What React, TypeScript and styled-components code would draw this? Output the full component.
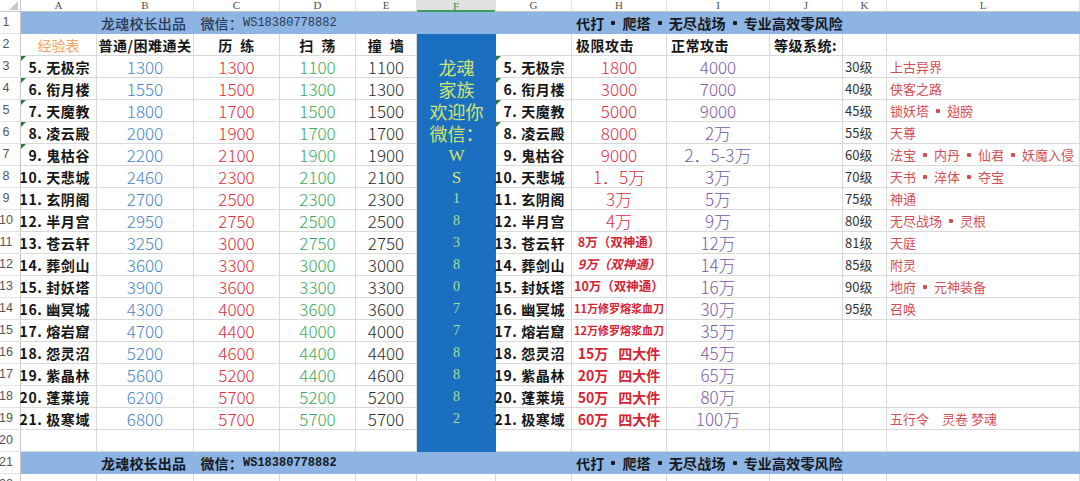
import React from "react";
import styled, { createGlobalStyle, css } from "styled-components";

const COLS = [21, 76, 97, 86, 76, 61, 79, 76, 95, 103, 73, 44, 193];
const LETTERS = ["A", "B", "C", "D", "E", "F", "G", "H", "I", "J", "K", "L"];
const GRID = "#d9d9d9";
const SANS = `"Noto Sans CJK SC", "Noto Sans", sans-serif`;

const GlobalStyle = createGlobalStyle`
  html, body { margin: 0; padding: 0; background: #fff; }
  body { font-family: ${SANS}; overflow: hidden; }
  #root { width: 1080px; height: 481px; overflow: hidden; }
`;

const Sheet = styled.div`
  display: grid;
  grid-template-columns: ${COLS.map((w) => `${w}px`).join(" ")};
  grid-template-rows: 12px repeat(22, 22px);
  width: 1080px;
  height: 481px;
  overflow: hidden;
  background: #fff;
`;

const Pos = styled.div<{ $r: number; $c: number }>`
  grid-row: ${(p) => p.$r};
  grid-column: ${(p) => p.$c};
  box-sizing: border-box;
  min-width: 0;
  position: relative;
  display: flex;
  align-items: center;
  white-space: nowrap;
  line-height: 1;
`;

const Corner = styled(Pos)`
  border-right: 1px solid #c6c6c6;
  border-bottom: 1px solid #c6c6c6;
  &::after {
    content: "";
    position: absolute;
    right: 2px;
    bottom: 1px;
    border-left: 9px solid transparent;
    border-bottom: 9px solid #c8c8c8;
  }
`;

const ColHead = styled(Pos)<{ $active?: boolean }>`
  justify-content: center;
  font-family: "Liberation Serif", serif;
  font-size: 11px;
  color: #505050;
  border-right: 1px solid #e2e2e2;
  border-bottom: 1px solid #c6c6c6;
  ${(p) =>
    p.$active &&
    css`
      background: #e1e1e1;
      color: #2f8f4f;
      border-bottom: none;
      box-shadow: inset 0 -2px 0 #3f9d5c;
    `}
`;

const RowHead = styled(Pos)`
  justify-content: center;
  padding-right: 8px;
  font-family: "Liberation Sans", sans-serif;
  font-size: 12.5px;
  color: #555;
  border-right: 1px solid #c6c6c6;
  border-bottom: 1px solid #e2e2e2;
`;

const Cell = styled(Pos)<{ $align?: "left" | "center" | "right" }>`
  border-right: 1px solid ${GRID};
  border-bottom: 1px solid ${GRID};
  padding: 0 4px;
  justify-content: ${(p) =>
    p.$align === "left" ? "flex-start" : p.$align === "right" ? "flex-end" : "center"};
`;

const LabelCell = styled(Cell)<{ $flag?: boolean }>`
  justify-content: flex-end;
  padding-right: 6px;
  font-size: 14px;
  font-weight: 700;
  letter-spacing: 0.6px;
  color: #151515;
  ${(p) =>
    p.$flag &&
    css`
      &::before {
        content: "";
        position: absolute;
        left: 0;
        top: 0;
        border-top: 5px solid #2a7a3c;
        border-right: 5px solid transparent;
      }
    `}
`;

const TitleCell = styled(Cell)`
  font-size: 14px;
  color: #f2a45e;
`;

const HeadCell = styled(Cell)`
  font-size: 14px;
  font-weight: 700;
  color: #151515;
  letter-spacing: 0.5px;
`;

const NumCell = styled(Cell)<{ $tone: string }>`
  justify-content: center;
  font-size: 17px;
  font-weight: 300;
  color: ${(p) => p.$tone};
`;

const NoteCell = styled(Cell)<{ $variant: "god" | "godItalic" | "blade" | "four" }>`
  justify-content: center;
  padding: 0 2px;
  font-weight: 700;
  color: #d42434;
  font-size: ${(p) => (p.$variant === "blade" ? "11px" : p.$variant === "four" ? "14px" : "12.5px")};
  font-style: ${(p) => (p.$variant === "godItalic" ? "italic" : "normal")};
`;

const Gap = styled.span`
  display: inline-block;
  width: 10px;
`;

const LevelCell = styled(Cell)`
  justify-content: flex-start;
  padding-left: 2px;
  font-size: 13px;
  color: #333;
`;

const UnlockCell = styled(Cell)`
  justify-content: flex-start;
  padding-left: 3px;
  font-size: 13px;
  color: #d24f55;
`;

const Dot = styled.span<{ $space?: number }>`
  display: inline-block;
  flex: none;
  width: 4px;
  height: 4px;
  border-radius: 1px;
  background: currentColor;
  margin: 0 ${(p) => p.$space ?? 7}px;
`;

const Band = styled.div<{ $r: number }>`
  grid-row: ${(p) => p.$r};
  grid-column: 2 / 14;
  display: grid;
  grid-template-columns: ${COLS.slice(1).map((w) => `${w}px`).join(" ")};
  align-items: center;
  background: #8db4e2;
  line-height: 1;
  white-space: nowrap;
`;

const BandText = styled.div<{ $col: number; $strong?: boolean }>`
  grid-column: ${(p) => p.$col} / span 5;
  display: flex;
  align-items: center;
  padding-left: 4px;
  font-size: 14px;
  font-weight: ${(p) => (p.$strong ? 700 : 500)};
  color: ${(p) => (p.$strong ? "#151a22" : "#2a3a52")};
  letter-spacing: 0.2px;
  min-width: 0;
`;

const Mono = styled.span`
  font-family: "Liberation Mono", monospace;
  font-size: 12px;
  letter-spacing: 0;
`;

type FKind = "big" | "letter" | "digit" | "none";

const FCell = styled(Pos)<{ $kind: FKind }>`
  justify-content: center;
  background: #1a6fc0;
  ${(p) =>
    p.$kind === "big"
      ? css`
          font-size: 18px;
          color: #cfe56f;
        `
      : p.$kind === "letter"
      ? css`
          font-family: "Liberation Serif", serif;
          font-size: 17px;
          color: #d4e66f;
        `
      : css`
          font-family: "Liberation Serif", serif;
          font-size: 14px;
          color: #a6e29a;
        `}
`;

type HNote = { text: string; variant?: "god" | "godItalic" | "blade" | "four" };
type Row = {
  a: string;
  b: string;
  c: string;
  d: string;
  e: string;
  h: HNote;
  i: string;
  k?: string;
  l?: string;
};

const ROWS: Row[] = [
  { a: "5. 无极宗", b: "1300", c: "1300", d: "1100", e: "1100", h: { text: "1800" }, i: "4000", k: "30级", l: "上古异界" },
  { a: "6. 衔月楼", b: "1550", c: "1500", d: "1300", e: "1300", h: { text: "3000" }, i: "7000", k: "40级", l: "侠客之路" },
  { a: "7. 天魔教", b: "1800", c: "1700", d: "1500", e: "1500", h: { text: "5000" }, i: "9000", k: "45级", l: "锁妖塔・翅膀" },
  { a: "8. 凌云殿", b: "2000", c: "1900", d: "1700", e: "1700", h: { text: "8000" }, i: "2万", k: "55级", l: "天尊" },
  { a: "9. 鬼枯谷", b: "2200", c: "2100", d: "1900", e: "1900", h: { text: "9000" }, i: "2．5-3万", k: "60级", l: "法宝・内丹・仙君・妖魔入侵" },
  { a: "10. 天悲城", b: "2460", c: "2300", d: "2100", e: "2100", h: { text: "1．5万" }, i: "3万", k: "70级", l: "天书・淬体・夺宝" },
  { a: "11. 玄阴阁", b: "2700", c: "2500", d: "2300", e: "2300", h: { text: "3万" }, i: "5万", k: "75级", l: "神通" },
  { a: "12. 半月宫", b: "2950", c: "2750", d: "2500", e: "2500", h: { text: "4万" }, i: "9万", k: "80级", l: "无尽战场・灵根" },
  { a: "13. 苍云轩", b: "3250", c: "3000", d: "2750", e: "2750", h: { text: "8万（双神通）", variant: "god" }, i: "12万", k: "81级", l: "天庭" },
  { a: "14. 葬剑山", b: "3600", c: "3300", d: "3000", e: "3000", h: { text: "9万（双神通）", variant: "godItalic" }, i: "14万", k: "85级", l: "附灵" },
  { a: "15. 封妖塔", b: "3900", c: "3600", d: "3300", e: "3300", h: { text: "10万（双神通）", variant: "god" }, i: "16万", k: "90级", l: "地府・元神装备" },
  { a: "16. 幽冥城", b: "4300", c: "4000", d: "3600", e: "3600", h: { text: "11万修罗熔浆血刀", variant: "blade" }, i: "30万", k: "95级", l: "召唤" },
  { a: "17. 熔岩窟", b: "4700", c: "4400", d: "4000", e: "4000", h: { text: "12万修罗熔浆血刀", variant: "blade" }, i: "35万" },
  { a: "18. 怨灵沼", b: "5200", c: "4600", d: "4400", e: "4400", h: { text: "15万|四大件", variant: "four" }, i: "45万" },
  { a: "19. 紫晶林", b: "5600", c: "5200", d: "4400", e: "4600", h: { text: "20万|四大件", variant: "four" }, i: "65万" },
  { a: "20. 蓬莱境", b: "6200", c: "5700", d: "5200", e: "5200", h: { text: "50万|四大件", variant: "four" }, i: "80万" },
  { a: "21. 极寒域", b: "6800", c: "5700", d: "5700", e: "5700", h: { text: "60万|四大件", variant: "four" }, i: "100万", l: "五行令　灵卷 梦魂" },
];

const F_TEXTS: { t: string; k: FKind }[] = [
  { t: "", k: "none" },
  { t: "龙魂", k: "big" },
  { t: "家族", k: "big" },
  { t: "欢迎你", k: "big" },
  { t: "微信：", k: "big" },
  { t: "W", k: "letter" },
  { t: "S", k: "letter" },
  ...["1", "8", "3", "8", "0", "7", "7", "8", "8", "8", "2"].map((t) => ({ t, k: "digit" as const })),
  { t: "", k: "none" },
];

const withDots = (text: string, space?: number) => {
  const parts = text.split("・");
  return parts.map((p, idx) => (
    <React.Fragment key={idx}>
      {idx > 0 && <Dot $space={space} />}
      {p}
    </React.Fragment>
  ));
};

const renderNote = (h: HNote) => {
  if (h.variant === "four") {
    const [a, b] = h.text.split("|");
    return (
      <>
        {a}
        <Gap />
        {b}
      </>
    );
  }
  return h.text;
};

export default function App() {
  const cells: React.ReactNode[] = [];

  cells.push(<Corner key="corner" $r={1} $c={1} />);
  LETTERS.forEach((l, idx) => {
    cells.push(
      <ColHead key={`ch-${l}`} $r={1} $c={idx + 2} $active={l === "F"}>
        {l}
      </ColHead>
    );
  });
  for (let n = 1; n <= 22; n++) {
    cells.push(
      <RowHead key={`rh-${n}`} $r={n + 1} $c={1}>
        {n}
      </RowHead>
    );
  }

  const r2 = 3;
  cells.push(<TitleCell key="a2" $r={r2} $c={2}>经验表</TitleCell>);
  cells.push(<HeadCell key="b2" $r={r2} $c={3}>普通/困难通关</HeadCell>);
  cells.push(<HeadCell key="c2" $r={r2} $c={4}>历{"\u2002"}练</HeadCell>);
  cells.push(<HeadCell key="d2" $r={r2} $c={5}>扫{"\u2002"}荡</HeadCell>);
  cells.push(<HeadCell key="e2" $r={r2} $c={6}>撞{"\u2002"}墙</HeadCell>);
  cells.push(<HeadCell key="g2" $r={r2} $c={8} />);
  cells.push(<HeadCell key="h2" $r={r2} $c={9} $align="left">极限攻击</HeadCell>);
  cells.push(<HeadCell key="i2" $r={r2} $c={10} $align="left">正常攻击</HeadCell>);
  cells.push(<HeadCell key="j2" $r={r2} $c={11} $align="left">等级系统:</HeadCell>);
  cells.push(<HeadCell key="k2" $r={r2} $c={12} />);
  cells.push(<HeadCell key="l2" $r={r2} $c={13} />);

  F_TEXTS.forEach((f, idx) => {
    cells.push(
      <FCell key={`f${idx + 2}`} $r={idx + 3} $c={7} $kind={f.k}>
        {f.t}
      </FCell>
    );
  });

  ROWS.forEach((row, idx) => {
    const r = idx + 4;
    const n = idx + 3;
    cells.push(
      <LabelCell key={`a${n}`} $r={r} $c={2} $flag={n <= 7}>
        {row.a}
      </LabelCell>
    );
    cells.push(<NumCell key={`b${n}`} $r={r} $c={3} $tone="#4a86c8">{row.b}</NumCell>);
    cells.push(<NumCell key={`c${n}`} $r={r} $c={4} $tone="#dd2f3c">{row.c}</NumCell>);
    cells.push(<NumCell key={`d${n}`} $r={r} $c={5} $tone="#3daa5c">{row.d}</NumCell>);
    cells.push(<NumCell key={`e${n}`} $r={r} $c={6} $tone="#2b2b2b">{row.e}</NumCell>);
    cells.push(
      <LabelCell key={`g${n}`} $r={r} $c={8} $flag={n <= 6}>
        {row.a}
      </LabelCell>
    );
    if (row.h.variant) {
      cells.push(
        <NoteCell key={`h${n}`} $r={r} $c={9} $variant={row.h.variant}>
          {renderNote(row.h)}
        </NoteCell>
      );
    } else {
      cells.push(<NumCell key={`h${n}`} $r={r} $c={9} $tone="#d9303f">{row.h.text}</NumCell>);
    }
    cells.push(<NumCell key={`i${n}`} $r={r} $c={10} $tone="#7d5aa6">{row.i}</NumCell>);
    cells.push(<Cell key={`j${n}`} $r={r} $c={11} />);
    cells.push(<LevelCell key={`k${n}`} $r={r} $c={12}>{row.k ?? ""}</LevelCell>);
    cells.push(
      <UnlockCell key={`l${n}`} $r={r} $c={13}>
        {row.l ? withDots(row.l, 7) : ""}
      </UnlockCell>
    );
  });

  [21, 23].forEach((r) => {
    for (let c = 2; c <= 13; c++) {
      if (r === 21 && c === 7) continue;
      cells.push(<Cell key={`empty-${r}-${c}`} $r={r} $c={c} />);
    }
  });

  return (
    <>
      <GlobalStyle />
      <Sheet>
        {cells}
        <Band $r={2}>
          <BandText $col={2}>
            龙魂校长出品　微信：<Mono>WS18380778882</Mono>
          </BandText>
          <BandText $col={8} $strong>
            {withDots("代打・爬塔・无尽战场・专业高效零风险", 7)}
          </BandText>
        </Band>
        <Band $r={22}>
          <BandText $col={2} $strong>
            龙魂校长出品　微信：<Mono>WS18380778882</Mono>
          </BandText>
          <BandText $col={8} $strong>
            {withDots("代打・爬塔・无尽战场・专业高效零风险", 7)}
          </BandText>
        </Band>
      </Sheet>
    </>
  );
}
